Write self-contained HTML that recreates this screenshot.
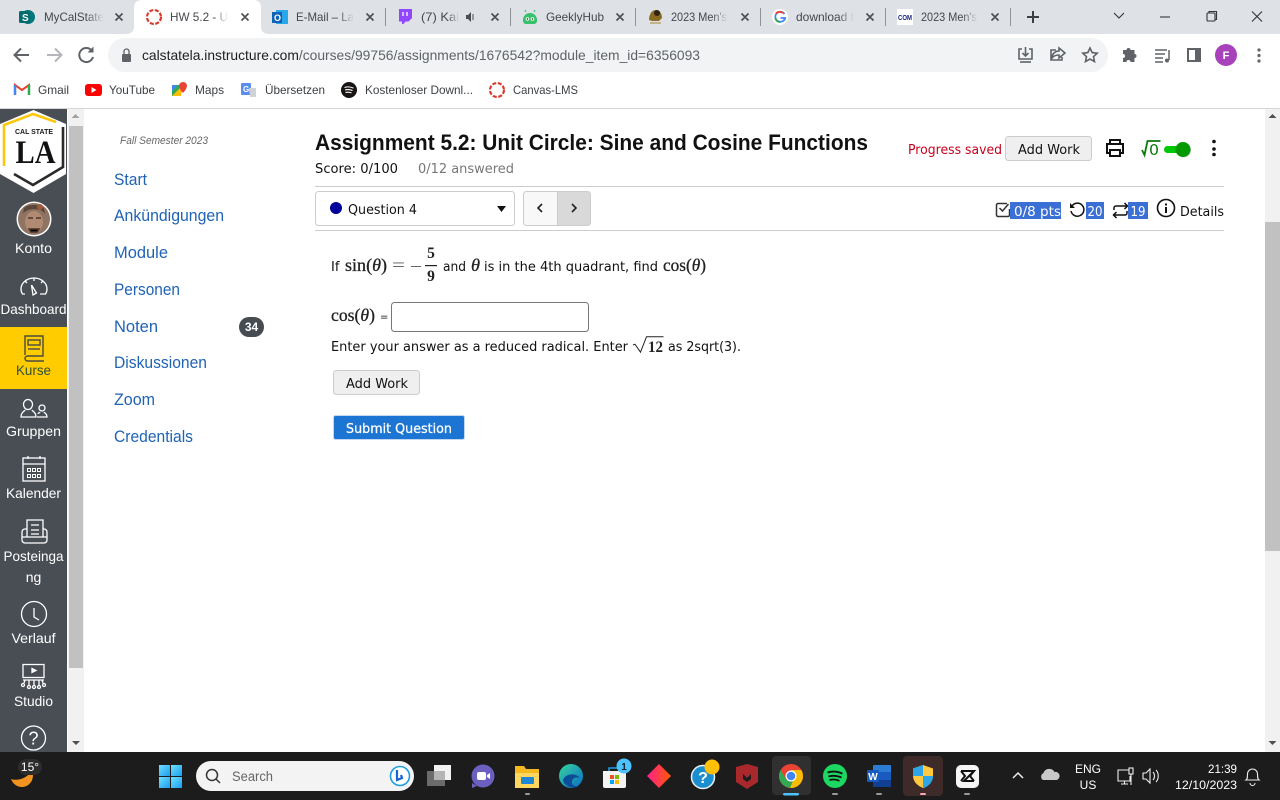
<!DOCTYPE html>
<html><head><meta charset="utf-8"><title>HW 5.2</title>
<style>
html,body{margin:0;padding:0;width:1280px;height:800px;overflow:hidden;background:#fff}
svg{display:block}
text{white-space:pre}
.ui{font-family:"Liberation Sans",sans-serif}
.t{font-family:"Liberation Sans",sans-serif;font-size:12px;fill:#45474b}
.b{font-family:"Liberation Sans",sans-serif;font-size:12px;fill:#3c4043}
.n{font-family:"Liberation Sans",sans-serif;font-size:14px;fill:#fff;text-anchor:middle}
.c{font-family:"Liberation Sans",sans-serif;font-size:16.5px;fill:#1f63b5}
.d{font-family:"DejaVu Sans",sans-serif;font-size:13px;fill:#111}
.m{font-family:"Liberation Serif",serif;font-size:18px;fill:#222;stroke:#222;stroke-width:.3}
.w{font-family:"Liberation Sans",sans-serif;font-size:12px;fill:#fff}
.x{stroke:#4a4d51;stroke-width:1.6;fill:none}
.i{fill:none;stroke:#5f6368;stroke-width:1.6}
.s{fill:none;stroke:#fff;stroke-width:1.3}
</style></head><body>
<svg width="1280" height="800" viewBox="0 0 1280 800" xmlns="http://www.w3.org/2000/svg">
<defs>
<linearGradient id="fd" x1="0" x2="1"><stop offset="0" stop-color="#dee1e6" stop-opacity="0"/><stop offset="1" stop-color="#dee1e6"/></linearGradient>
<linearGradient id="fw" x1="0" x2="1"><stop offset="0" stop-color="#fff" stop-opacity="0"/><stop offset="1" stop-color="#fff"/></linearGradient>
<linearGradient id="dm" x1="0" x2="1"><stop offset="0" stop-color="#ff1f8e"/><stop offset="1" stop-color="#ff5a00"/></linearGradient>
<linearGradient id="win" x1="0" y1="0" x2="1" y2="1"><stop offset="0" stop-color="#6fe0ff"/><stop offset="1" stop-color="#1a9cf0"/></linearGradient>
<linearGradient id="edge" x1="0" y1="0" x2="1" y2="1"><stop offset="0" stop-color="#36d6a0"/><stop offset="1" stop-color="#0a6cc4"/></linearGradient>
</defs>

<!-- tab strip -->
<rect width="1280" height="34" fill="#dee1e6"/>
<path d="M126 34q8 0 8-8V8q0-8 8-8h111q8 0 8 8v18q0 8 8 8z" fill="#fff"/>
<g stroke="#8f9296" stroke-width="1"><path d="M385.500 8v18M510.500 8v18M635.500 8v18M760.500 8v18M885.500 8v18M1010.500 8v18"/></g>

<!-- favicons -->
<circle cx="28" cy="17" r="7" fill="#03787c"/><rect x="19" y="11" width="11" height="12" rx="1.500" fill="#036c70"/><text x="22" y="21" class="ui" font-size="10" font-weight="bold" fill="#fff">S</text>
<circle cx="154" cy="17" r="7" fill="none" stroke="#d8392c" stroke-width="2.200" stroke-dasharray="4 1.600"/>
<rect x="276" y="10" width="12" height="14" fill="#28a8ea"/><rect x="272" y="12" width="10" height="11" fill="#0f62b4"/><text x="274" y="21" class="ui" font-size="9" font-weight="bold" fill="#fff">O</text>
<path d="M399 9h13v9l-3.500 3.500h-3l-2 2.500h-1.500v-2.500h-3z" fill="#9146ff"/><path d="M403 12v4M407 12v4" stroke="#fff" stroke-width="1.300"/>
<path d="M523 20a7 7 0 0 1 14 0v1a3 3 0 0 1-3 3h-8a3 3 0 0 1-3-3z" fill="#35c26b"/><path d="M526 12l-1-2M534 12l1-2" stroke="#35c26b"/><circle cx="527.500" cy="19" r="1.800" fill="#fff"/><circle cx="532.500" cy="19" r="1.800" fill="#fff"/><circle cx="527.500" cy="19" r=".8" fill="#222"/><circle cx="532.500" cy="19" r=".8" fill="#222"/>
<path d="M649 20c0-6 3-10 7-10 4 0 6 4 6 8l-3 3h-7z" fill="#8a6a22"/><circle cx="657" cy="13" r="3" fill="#2d2413"/><path d="M650 23h11" stroke="#b8a56a" stroke-width="1.500"/>
<circle cx="780" cy="17" r="8" fill="#fff"/><path d="M784.500 14a5 5 0 1 0 .7 4h-4.700" fill="none" stroke="#4285f4" stroke-width="1.800"/><path d="M776 13.500a5 5 0 0 1 7-.5" fill="none" stroke="#ea4335" stroke-width="1.800"/><path d="M775.200 18a5 5 0 0 0 5 4" fill="none" stroke="#34a853" stroke-width="1.800"/>
<rect x="897" y="9" width="16" height="16" fill="#fff"/><text x="898" y="20" class="ui" font-size="7.500" font-weight="bold" fill="#1a237e" textLength="14" lengthAdjust="spacingAndGlyphs">COM</text>

<!-- tab titles -->
<text x="44" y="21" class="t" textLength="60" lengthAdjust="spacingAndGlyphs">MyCalState</text><rect x="86" y="8" width="18" height="18" fill="url(#fd)"/>
<text x="170" y="21" class="t" fill="#333" textLength="58" lengthAdjust="spacingAndGlyphs">HW 5.2 - U</text><rect x="214" y="8" width="14" height="18" fill="url(#fw)"/>
<text x="296" y="21" class="t" textLength="58" lengthAdjust="spacingAndGlyphs">E-Mail – La</text><rect x="338" y="8" width="16" height="18" fill="url(#fd)"/>
<text x="421" y="21" class="t" textLength="38" lengthAdjust="spacingAndGlyphs">(7) Kai</text><rect x="448" y="8" width="11" height="18" fill="url(#fd)"/>
<path d="M466 15h2l3-3v10l-3-3h-2z" fill="#4a4d51"/><path d="M473 14v6" stroke="#4a4d51"/>
<text x="546" y="21" class="t" textLength="58" lengthAdjust="spacingAndGlyphs">GeeklyHub</text>
<text x="671" y="21" class="t" textLength="56" lengthAdjust="spacingAndGlyphs">2023 Men's</text><rect x="712" y="8" width="16" height="18" fill="url(#fd)"/>
<text x="796" y="21" class="t" textLength="58" lengthAdjust="spacingAndGlyphs">download t</text><rect x="838" y="8" width="16" height="18" fill="url(#fd)"/>
<text x="921" y="21" class="t" textLength="56" lengthAdjust="spacingAndGlyphs">2023 Men's</text><rect x="962" y="8" width="16" height="18" fill="url(#fd)"/>
<!-- tab closes -->
<g class="x"><path d="M115.500 13.500l7 7m0-7l-7 7M241.500 13.500l7 7m0-7l-7 7M366.500 13.500l7 7m0-7l-7 7M491.500 13.500l7 7m0-7l-7 7M616.500 13.500l7 7m0-7l-7 7M741.500 13.500l7 7m0-7l-7 7M866.500 13.500l7 7m0-7l-7 7M991.500 13.500l7 7m0-7l-7 7"/></g>
<path d="M1033 11v12M1027 17h12" stroke="#3c4043" stroke-width="2" fill="none"/>
<!-- window controls -->
<g fill="none" stroke="#333" stroke-width="1.100"><path d="M1114 13l5 5 5-5"/><path d="M1160 17h10"/><rect x="1207" y="13" width="8" height="8" rx="1"/><path d="M1209 13v-1.500h7.500v8h-1.500"/><path d="M1252 11.500l10 10m0-10l-10 10"/></g>

<!-- toolbar -->
<rect y="34" width="1280" height="74" fill="#fff"/>
<rect x="108" y="38" width="1000" height="34" rx="17" fill="#f1f3f4"/>
<path d="M29 55H15m6-6.500L14.500 55l6.500 6.500" fill="none" stroke="#5f6368" stroke-width="2"/>
<path d="M47 55h14m-6-6.500L61.500 55 55 61.500" fill="none" stroke="#b4b6b9" stroke-width="2"/>
<path d="M92 51a7 7 0 1 0 1 6" fill="none" stroke="#5f6368" stroke-width="2"/><path d="M93.500 46.500v6h-6z" fill="#5f6368"/>
<rect x="122" y="54" width="9" height="8" rx="1" fill="#5f6368"/><path d="M124 54v-2.500a2.500 2.500 0 0 1 5 0V54" fill="none" stroke="#5f6368" stroke-width="1.300"/>
<text x="142" y="60" class="ui" font-size="14" fill="#5f6368" textLength="558" lengthAdjust="spacingAndGlyphs"><tspan fill="#202124">calstatela.instructure.com</tspan>/courses/99756/assignments/1676542?module_item_id=6356093</text>
<g class="i"><path d="M1022 49h-3v10h13V49h-3"/><path d="M1025.500 47v9m-3-3l3 3 3-3"/><path d="M1020 62h11"/><path d="M1059 48l6 5-6 5v-3c-3 0-5 .5-7 3 0-4 3-7 7-7z"/><path d="M1056 50h-5v10h11v-3"/><path d="M1090 48l2.200 4.600 5 .6-3.700 3.400 1 5-4.500-2.500-4.500 2.500 1-5-3.700-3.400 5-.6z"/></g>
<path d="M1124 51h3.500a2 2 0 0 1 4 0h4v4a2 2 0 0 1 0 4v4h-4a2 2 0 0 0-4 0h-3.500v-4a2 2 0 0 0 0-4z" fill="#5f6368" transform="translate(-1 -1)"/>
<path d="M1155 50h12M1155 54h10M1155 58h8M1155 62h8" stroke="#5f6368" stroke-width="1.500" fill="none"/><path d="M1169 50v10" stroke="#5f6368" stroke-width="1.500"/><circle cx="1167" cy="60.500" r="2" fill="#5f6368"/>
<rect x="1188" y="49" width="12" height="12" fill="none" stroke="#5f6368" stroke-width="2"/><rect x="1195" y="49" width="6" height="12" fill="#5f6368"/>
<circle cx="1226" cy="55" r="11" fill="#a742bb"/><text x="1226" y="59" class="ui" font-size="11" fill="#fff" text-anchor="middle" font-weight="bold">F</text>
<g fill="#5f6368"><circle cx="1259" cy="50" r="1.600"/><circle cx="1259" cy="55.500" r="1.600"/><circle cx="1259" cy="61" r="1.600"/></g>

<!-- bookmarks -->
<path d="M15 95V85l7 5 7-5v10" fill="none" stroke="#e94235" stroke-width="2"/><path d="M15 85v10" stroke="#4285f4" stroke-width="2.500"/><path d="M29 85v10" stroke="#34a853" stroke-width="2.500"/>
<text x="38" y="94" class="b" textLength="31" lengthAdjust="spacingAndGlyphs">Gmail</text>
<rect x="85" y="84" width="17" height="12" rx="3" fill="#f00"/><path d="M91.500 87v6l5-3z" fill="#fff"/>
<text x="109" y="94" class="b" textLength="46" lengthAdjust="spacingAndGlyphs">YouTube</text>
<path d="M172 85h10l-1 11h-9z" fill="#34a853"/><path d="M172 96l9-9v9z" fill="#fbbc04"/><path d="M172 85h6l-6 6z" fill="#4285f4"/><path d="M183 82a4 4 0 0 1 4 4c0 2.500-4 7-4 7s-4-4.500-4-7a4 4 0 0 1 4-4z" fill="#ea4335"/>
<text x="195" y="94" class="b" textLength="29" lengthAdjust="spacingAndGlyphs">Maps</text>
<rect x="241" y="83" width="10" height="12" rx="1" fill="#5b8def"/><path d="M249 88h7v9h-6z" fill="#cfd3d8"/><text x="243" y="92" class="ui" font-size="8" fill="#fff" font-weight="bold">G</text>
<text x="265" y="94" class="b" textLength="60" lengthAdjust="spacingAndGlyphs">Übersetzen</text>
<circle cx="349" cy="90" r="8" fill="#191414"/><path d="M344.500 87.500c3-1 6-.8 9 .6M345 90c2.500-.8 5-.6 7.500.5M345.500 92.500c2-.6 4-.4 6 .4" stroke="#fff" stroke-width="1.100" fill="none"/>
<text x="365" y="94" class="b" textLength="108" lengthAdjust="spacingAndGlyphs">Kostenloser Downl...</text>
<circle cx="497" cy="90" r="7" fill="none" stroke="#d8392c" stroke-width="2.200" stroke-dasharray="4 1.600"/>
<text x="513" y="94" class="b" textLength="65" lengthAdjust="spacingAndGlyphs">Canvas-LMS</text>
<rect y="108" width="1280" height="1" fill="#d6d6d6"/>

<!-- Canvas nav -->
<rect y="109" width="67" height="643" fill="#494e55"/>
<path d="M33.500 110L66 124v50l-32.500 19L0 174v-50z" fill="#fff"/>
<path d="M4 166v-41l29-11 23 8" fill="none" stroke="#fcc70c" stroke-width="2.600"/>
<path d="M63 127v40l-30 18-19-11" fill="none" stroke="#2a2a2a" stroke-width="2.600"/>
<text x="15" y="134" class="ui" font-size="7.500" font-weight="bold" fill="#1a1a1a" textLength="38" lengthAdjust="spacingAndGlyphs">CAL STATE</text>
<text x="15.500" y="163" font-family="Liberation Serif,serif" font-size="33" font-weight="bold" fill="#111" textLength="40" lengthAdjust="spacingAndGlyphs">LA</text>
<circle cx="34" cy="219" r="17.500" fill="#fff"/>
<circle cx="34" cy="219" r="16" fill="#8f7463"/><path d="M23 214c3-6 18-7 22 0l-1-6c-4-4-16-4-20 0z" fill="#5a463b"/><ellipse cx="34" cy="222" rx="9" ry="11" fill="#b08a72"/><path d="M29 229h10l-2 3h-6zM28 218h5M36 218h5" stroke="#4c3428" stroke-width="1.500"/><circle cx="40" cy="207" r="3" fill="#9c5a3a"/>
<text x="33.500" y="253" class="n" textLength="37" lengthAdjust="spacingAndGlyphs">Konto</text>
<g class="s"><path d="M25 294h-2.500c-1-1.500-1.500-3-1.500-5a13 11 0 0 1 26 0c0 2-.5 3.500-1.500 5H40"/><path d="M31.500 285l5 8-3.500 2z"/><path d="M34 278v3M25 281l2 2M43 281l-2 2"/></g>
<text x="33.500" y="314" class="n" textLength="66" lengthAdjust="spacingAndGlyphs">Dashboard</text>
<rect y="327" width="67" height="62" fill="#fc0"/>
<g fill="none" stroke="#4a4b42" stroke-width="1.400"><path d="M25 355V336h18v20H27.500a2.500 2.500 0 0 0 0 5H44"/><rect x="28" y="340" width="12" height="5"/><path d="M28 349h12"/></g>
<text x="33.500" y="375" class="n" style="fill:#2f4f3a" textLength="35" lengthAdjust="spacingAndGlyphs">Kurse</text>
<g class="s"><ellipse cx="28" cy="404.500" rx="4.500" ry="5"/><path d="M25 410c-.5 1.500-4 2-4 7h15c0-5-3.500-5.500-4-7"/><circle cx="42" cy="408" r="3"/><path d="M40 412c-.5 1-2 1-2 2M44 412c.5 1 3 1.500 3 5h-10"/></g>
<text x="33.500" y="436" class="n" textLength="55" lengthAdjust="spacingAndGlyphs">Gruppen</text>
<g class="s"><rect x="23" y="458" width="22" height="23"/><path d="M23 464h22M28 456v3M40 456v3"/><g stroke-width="1"><rect x="27.500" y="468.500" width="3" height="3"/><rect x="32.500" y="468.500" width="3" height="3"/><rect x="37.500" y="468.500" width="3" height="3"/><rect x="27.500" y="474.500" width="3" height="3"/><rect x="32.500" y="474.500" width="3" height="3"/><rect x="37.500" y="474.500" width="3" height="3"/></g></g>
<text x="33.500" y="498" class="n" textLength="55" lengthAdjust="spacingAndGlyphs">Kalender</text>
<g class="s"><path d="M27 537V520h16v17"/><path d="M31 525h8M31 530h8M31 534h8"/><path d="M27 529h-2a3 3 0 0 0-3 3v8a3 3 0 0 0 3 3h19a3 3 0 0 0 3-3v-8a3 3 0 0 0-3-3h-1"/><path d="M22 537h25"/></g>
<text x="33.500" y="561" class="n" textLength="60" lengthAdjust="spacingAndGlyphs">Posteinga</text>
<text x="33.500" y="582" class="n">ng</text>
<g class="s"><circle cx="34" cy="614" r="12.500"/><path d="M34 608v9l5 3"/></g>
<text x="33.500" y="643" class="n" textLength="44" lengthAdjust="spacingAndGlyphs">Verlauf</text>
<g class="s"><rect x="23" y="664.500" width="21" height="13"/><path d="M32 668.500l4 2-4 2z" fill="#fff"/><path d="M23 680h21M29 680v5M34 680v5M39 680v5M25 680l-1 3M42 680l1 3"/><circle cx="23" cy="685" r="1.500"/><circle cx="29" cy="687" r="1.500"/><circle cx="34" cy="687" r="1.500"/><circle cx="39" cy="687" r="1.500"/><circle cx="44" cy="685" r="1.500"/></g>
<text x="33.500" y="706" class="n" textLength="39" lengthAdjust="spacingAndGlyphs">Studio</text>
<g class="s"><circle cx="33.500" cy="738" r="12"/></g><text x="33.500" y="744.500" class="n" style="font-size:18px">?</text>

<!-- inner scrollbar -->
<rect x="68" y="109" width="16" height="643" fill="#f1f1f1"/>
<rect x="69" y="126" width="14" height="542" fill="#c1c1c1"/>
<path d="M75.500 114l-4 4h8z" fill="#a3a3a3"/><path d="M72 741h8l-4 4z" fill="#505050"/>
<!-- outer scrollbar -->
<rect x="1265" y="109" width="15" height="643" fill="#f1f1f1"/>
<rect x="1265" y="222" width="15" height="329" fill="#c1c1c1"/>
<path d="M1272.500 114l-4 4h8z" fill="#505050"/><path d="M1268.500 741h8l-4 4z" fill="#505050"/>

<!-- course nav -->
<text x="120" y="144" class="ui" font-size="11" font-style="italic" fill="#666" textLength="88" lengthAdjust="spacingAndGlyphs">Fall Semester 2023</text>
<text x="114" y="185" class="c" textLength="33" lengthAdjust="spacingAndGlyphs">Start</text>
<text x="114" y="221" class="c" textLength="110" lengthAdjust="spacingAndGlyphs">Ankündigungen</text>
<text x="114" y="258" class="c" textLength="54" lengthAdjust="spacingAndGlyphs">Module</text>
<text x="114" y="295" class="c" textLength="66" lengthAdjust="spacingAndGlyphs">Personen</text>
<text x="114" y="332" class="c" textLength="44" lengthAdjust="spacingAndGlyphs">Noten</text>
<text x="114" y="368" class="c" textLength="93" lengthAdjust="spacingAndGlyphs">Diskussionen</text>
<text x="114" y="405" class="c" textLength="41" lengthAdjust="spacingAndGlyphs">Zoom</text>
<text x="114" y="442" class="c" textLength="79" lengthAdjust="spacingAndGlyphs">Credentials</text>
<rect x="239" y="317" width="25" height="20" rx="10" fill="#474b52"/>
<text x="251.500" y="331" class="ui" font-size="12" font-weight="bold" fill="#fff" text-anchor="middle">34</text>

<!-- header -->
<text x="315" y="150" font-family="Liberation Sans,sans-serif" font-size="22" font-weight="bold" fill="#111" textLength="553" lengthAdjust="spacingAndGlyphs">Assignment 5.2: Unit Circle: Sine and Cosine Functions</text>
<text x="315" y="173" class="d" textLength="83" lengthAdjust="spacingAndGlyphs">Score: 0/100</text>
<text x="418" y="173" class="d" style="fill:#777" textLength="96" lengthAdjust="spacingAndGlyphs">0/12 answered</text>
<text x="908" y="154" class="d" style="fill:#c8001e" textLength="94" lengthAdjust="spacingAndGlyphs">Progress saved</text>
<rect x="1005.500" y="136.500" width="86" height="24" rx="3" fill="#efefef" stroke="#ccc"/>
<text x="1018" y="154" class="d" textLength="62" lengthAdjust="spacingAndGlyphs">Add Work</text>
<!-- print -->
<g fill="none" stroke="#111" stroke-width="2"><path d="M1110 144v-4h10v4"/><path d="M1110 153h-3v-9h16v9h-3"/><rect x="1110" y="150" width="10" height="6"/></g>
<!-- sqrt0 -->
<path d="M1142 150l2.500 5 3-14h13" fill="none" stroke="#0a7a0a" stroke-width="1.800"/>
<text x="1149" y="155" font-family="DejaVu Sans,sans-serif" font-size="15" fill="#0a7a0a" textLength="10" lengthAdjust="spacingAndGlyphs">0</text>
<rect x="1164" y="146" width="24" height="7" rx="3.500" fill="#00c800"/>
<circle cx="1183.500" cy="150" r="7.500" fill="#666" opacity=".4"/><circle cx="1183" cy="149.500" r="7.500" fill="#009a00"/>
<g fill="#111"><circle cx="1214" cy="141.500" r="1.800"/><circle cx="1214" cy="149" r="1.800"/><circle cx="1214" cy="154.500" r="1.800"/></g>
<rect x="315" y="186" width="909" height="1" fill="#ccc"/>
<rect x="315" y="230" width="909" height="1" fill="#ccc"/>

<!-- toolbar row -->
<rect x="315.500" y="191.500" width="199" height="34" rx="3" fill="#fff" stroke="#ccc"/>
<circle cx="336" cy="208" r="6" fill="#00009a"/>
<text x="348" y="214" class="d" textLength="69" lengthAdjust="spacingAndGlyphs">Question 4</text>
<path d="M497 206h9l-4.500 6z" fill="#111"/>
<path d="M526.500 191.500h31v34h-31a3 3 0 0 1-3-3v-28a3 3 0 0 1 3-3z" fill="#f8f8f8" stroke="#ccc"/>
<path d="M557.500 191.500h30a3 3 0 0 1 3 3v28a3 3 0 0 1-3 3h-30z" fill="#d9d9d9" stroke="#ccc"/>
<path d="M542 204l-4 4 4 4M572 204l4 4-4 4" fill="none" stroke="#222" stroke-width="1.600"/>

<path d="M1007 203.500h-9a1.500 1.500 0 0 0-1.500 1.500v10a1.500 1.500 0 0 0 1.500 1.500h10a1.500 1.500 0 0 0 1.500-1.500v-6" fill="none" stroke="#333" stroke-width="1.500"/><path d="M999.500 208l3 3 6-7" fill="none" stroke="#333" stroke-width="1.500"/>
<rect x="1010" y="202" width="51" height="17" fill="#3a6fd6"/>
<text x="1014" y="216" class="d" style="fill:#fff" textLength="47" lengthAdjust="spacingAndGlyphs">0/8 pts</text>
<path d="M1072 206a6.500 6.500 0 1 1-1 5" fill="none" stroke="#111" stroke-width="1.500"/><path d="M1070 203v5h5z" fill="#111"/>
<rect x="1086" y="202" width="18" height="17" fill="#3a6fd6"/>
<text x="1095" y="216" class="d" style="fill:#fff" text-anchor="middle" textLength="15" lengthAdjust="spacingAndGlyphs">20</text>
<path d="M1114 210v-2a2 2 0 0 1 2-2h11m-2.500-3l3 3-3 3M1127 211v2a2 2 0 0 1-2 2h-11m2.500 3l-3-3 3-3" fill="none" stroke="#111" stroke-width="1.500"/>
<rect x="1128" y="202" width="20" height="17" fill="#3a6fd6"/>
<text x="1138" y="216" class="d" style="fill:#fff" text-anchor="middle" textLength="15" lengthAdjust="spacingAndGlyphs">19</text>
<circle cx="1166" cy="208" r="8.500" fill="none" stroke="#111" stroke-width="1.600"/><rect x="1165" y="207" width="2" height="6" fill="#111"/><rect x="1165" y="203.500" width="2" height="2" fill="#111"/>
<text x="1180" y="216" class="d" textLength="44" lengthAdjust="spacingAndGlyphs">Details</text>

<!-- question -->
<text x="331" y="271" class="d">If</text>
<text x="345" y="271" class="m" textLength="42" lengthAdjust="spacingAndGlyphs">sin(<tspan font-style="italic">θ</tspan>)</text>
<text x="392" y="271" class="m" style="fill:#555;stroke:none" textLength="13" lengthAdjust="spacingAndGlyphs">=</text>
<rect x="411" y="266" width="10" height="1" fill="#666"/>
<rect x="425" y="265" width="12" height="1.200" fill="#222"/>
<text x="431" y="258" class="m" text-anchor="middle" style="font-size:15.5px;font-weight:bold;stroke:none">5</text>
<text x="431" y="281" class="m" text-anchor="middle" style="font-size:15.5px;font-weight:bold;stroke:none">9</text>
<text x="443" y="271" class="d" textLength="23" lengthAdjust="spacingAndGlyphs">and</text>
<text x="471" y="271" class="m" font-style="italic" textLength="9" lengthAdjust="spacingAndGlyphs">θ</text>
<text x="484" y="271" class="d" textLength="174" lengthAdjust="spacingAndGlyphs">is in the 4th quadrant, find</text>
<text x="663" y="271" class="m" textLength="43" lengthAdjust="spacingAndGlyphs">cos(<tspan font-style="italic">θ</tspan>)</text>

<text x="331" y="321" class="m" textLength="44" lengthAdjust="spacingAndGlyphs">cos(<tspan font-style="italic">θ</tspan>)</text>
<text x="380" y="320" class="d" style="font-size:10px">=</text>
<rect x="391.500" y="302.500" width="197" height="29" rx="3" fill="#fff" stroke="#767676"/>
<text x="331" y="351" class="d" textLength="297" lengthAdjust="spacingAndGlyphs">Enter your answer as a reduced radical. Enter</text>
<path d="M633 345l2-.8 5.500 8 6-15.500h17" fill="none" stroke="#222" stroke-width="1"/>
<text x="648" y="352" class="m" style="font-size:15.500px;font-weight:bold;stroke:none" textLength="15" lengthAdjust="spacingAndGlyphs">12</text>
<text x="668" y="351" class="d" textLength="73" lengthAdjust="spacingAndGlyphs">as 2sqrt(3).</text>

<rect x="333.500" y="370.500" width="86" height="24" rx="3" fill="#efefef" stroke="#ccc"/>
<text x="346" y="388" class="d" textLength="62" lengthAdjust="spacingAndGlyphs">Add Work</text>
<rect x="333.500" y="415.500" width="131" height="24" rx="2" fill="#1c75d3" stroke="#c4d7ee"/>
<text x="346" y="433" class="d" style="fill:#fff;stroke:#fff;stroke-width:.25" textLength="106" lengthAdjust="spacingAndGlyphs">Submit Question</text>

<!-- taskbar -->
<rect y="752" width="1280" height="48" fill="#1c1c1c"/>
<path d="M11 779c6 2 14 0 19-6l3 2c0 7-5 12-11 12-5 0-9-3-11-8z" fill="#f29220"/>
<rect x="18" y="759" width="24" height="16" rx="8" fill="#2c2c2c"/><text x="30" y="771" class="w" text-anchor="middle">15°</text>
<g fill="url(#win)"><rect x="159" y="765" width="11" height="11"/><rect x="171" y="765" width="11" height="11"/><rect x="159" y="777" width="11" height="11"/><rect x="171" y="777" width="11" height="11"/></g>
<rect x="196" y="761" width="218" height="30" rx="15" fill="#f3f3f3"/>
<circle cx="212" cy="775" r="5.500" fill="none" stroke="#333" stroke-width="1.500"/><path d="M216 779l4 4" stroke="#333" stroke-width="1.500"/>
<text x="232" y="781" class="ui" font-size="13.500" fill="#666" textLength="41" lengthAdjust="spacingAndGlyphs">Search</text>
<circle cx="400" cy="776" r="9.500" fill="#fff" stroke="#1b9de2" stroke-width="1.600"/><path d="M397 770v10l5 -2-1-3" fill="none" stroke="#1466d8" stroke-width="2.200"/>
<rect x="427" y="771" width="18" height="15" fill="#6b6b6b"/><rect x="434" y="765" width="17" height="15" fill="#f2f2f2"/><rect x="434" y="771" width="11" height="9" fill="#b5b5b5"/>
<circle cx="483" cy="776" r="11.500" fill="#6b5fc0"/><rect x="477" y="772" width="9" height="8" rx="2" fill="#fff"/><path d="M487 775l3-2v6l-3-2z" fill="#fff"/><path d="M472 783v5l5-2z" fill="#6b5fc0"/>
<path d="M515 766h9l2 3h13v19h-24z" fill="#f5b81f"/><path d="M515 773h24v15h-24z" fill="#ffd75e"/><rect x="521" y="777" width="13" height="7" rx="1" fill="#1f86d3"/><rect x="525" y="793" width="5" height="2" rx="1" fill="#999"/>
<circle cx="571" cy="776" r="12" fill="url(#edge)"/><path d="M563 780c2-6 12-8 17-2-3-1-7-1-8 3s3 6 7 5c-7 4-15 0-16-6z" fill="#0b4d98"/>
<path d="M603 771h23v15a2 2 0 0 1-2 2h-19a2 2 0 0 1-2-2z" fill="#f3f3f3"/><path d="M609 771v-3h10v3" fill="none" stroke="#1b9de2" stroke-width="1.500"/>
<rect x="610" y="775" width="4" height="4" fill="#f25022"/><rect x="615" y="775" width="4" height="4" fill="#7fba00"/><rect x="610" y="780" width="4" height="4" fill="#00a4ef"/><rect x="615" y="780" width="4" height="4" fill="#ffb900"/>
<circle cx="624" cy="766" r="7.500" fill="#4cc2ff"/><text x="624" y="770" class="ui" font-size="10" font-weight="bold" fill="#123" text-anchor="middle">1</text>
<path d="M659 764l12 12-12 12-12-12z" fill="url(#dm)"/>
<circle cx="703" cy="777" r="11.500" fill="#1b8ecf" stroke="#e8f2f8" stroke-width="1.500"/><text x="703" y="783" class="ui" font-size="16" font-weight="bold" fill="#fff" text-anchor="middle">?</text><circle cx="712" cy="767" r="7.500" fill="#ffc107"/>
<path d="M736 767l11-3 11 3v15l-11 7-11-7z" fill="#a8282b"/><path d="M741 770l6 6 6-6v10l-6 4-6-4z" fill="#a8282b"/><path d="M743 774l4 4 4-4v5l-4 3-4-3z" fill="#1c1c1c"/>
<rect x="772" y="756" width="39" height="39" rx="4" fill="#303030"/>
<circle cx="791" cy="776" r="12" fill="#ea4335"/><path d="M780.600 770l5.500 9.500 5 -3.500 6.900 9.700A12 12 0 0 1 780.600 770z" fill="#34a853"/><path d="M803 776a12 12 0 0 0-1.600-6H791l4 6-5 12a12 12 0 0 0 13-12z" fill="#fbbc04"/><circle cx="791" cy="776" r="5.500" fill="#fff"/><circle cx="791" cy="776" r="4.300" fill="#4285f4"/>
<rect x="783" y="793" width="16" height="2.500" rx="1.200" fill="#4cc2ff"/>
<circle cx="835" cy="776" r="12" fill="#1ed760"/><path d="M827.500 772.500c5-1.500 10.500-1 15 1.200M828.500 776.500c4.500-1.200 9-.8 13 1M829.500 780c3.500-.8 7-.6 10 .8" fill="none" stroke="#111" stroke-width="1.800"/><rect x="832" y="793" width="6" height="2" rx="1" fill="#999"/>
<rect x="873" y="765" width="18" height="22" rx="1" fill="#2b7cd3"/><rect x="873" y="772" width="18" height="8" fill="#185abd"/><rect x="873" y="780" width="18" height="7" fill="#103f91"/><rect x="867" y="770" width="12" height="12" rx="1" fill="#185abd"/><text x="873" y="780" class="ui" font-size="10" font-weight="bold" fill="#fff" text-anchor="middle">W</text><rect x="876" y="793" width="6" height="2" rx="1" fill="#999"/>
<rect x="903" y="756" width="40" height="40" rx="4" fill="#3f2a2a"/>
<path d="M923 765l10 3.500v7c0 6-4 10-10 12.500-6-2.500-10-6.500-10-12.500v-7z" fill="#ffc83d"/><path d="M923 765v11h-10v-7.500zM923 776h10c0 6-4 10-10 12.500z" fill="#2da5e8"/>
<rect x="920" y="793" width="6" height="2" rx="1" fill="#f4a8ac"/>
<rect x="956" y="765" width="23" height="23" rx="5" fill="#f5f5f5"/><path d="M961 771h13l-10 10h10M961 771l4 5-4 5" fill="none" stroke="#111" stroke-width="2"/><path d="M974 771l-4 5 4 5" fill="none" stroke="#111" stroke-width="2"/><rect x="964" y="793" width="6" height="2" rx="1" fill="#999"/>
<!-- tray -->
<path d="M1013 778l5-5 5 5" fill="none" stroke="#eee" stroke-width="1.500"/>
<path d="M1043 780a4 4 0 0 1 .5-7 6 6 0 0 1 11-1 4 4 0 0 1 2 8z" fill="#c8c8c8"/>
<text x="1088" y="773" class="w" text-anchor="middle">ENG</text><text x="1088" y="789" class="w" text-anchor="middle">US</text>
<g fill="none" stroke="#eee" stroke-width="1.100"><path d="M1129 770h-11v11h12v-5M1121 784h7M1124.500 781v3"/><rect x="1129" y="768" width="4" height="6"/><path d="M1131 774v11"/><path d="M1143 773h3l4-4v14l-4-4h-3zM1153 772c2 2 2 6 0 8M1156 770c3 3 3 9 0 12"/><path d="M1246 780c1.500-1 1.500-3 1.500-6a5 5 0 0 1 10 0c0 3 0 5 1.500 6zM1250 783a2.500 2.500 0 0 0 5 0"/></g>
<text x="1237" y="773" class="w" text-anchor="end" textLength="29" lengthAdjust="spacingAndGlyphs">21:39</text>
<text x="1237" y="789" class="w" text-anchor="end" textLength="62" lengthAdjust="spacingAndGlyphs">12/10/2023</text>
</svg>
</body></html>
